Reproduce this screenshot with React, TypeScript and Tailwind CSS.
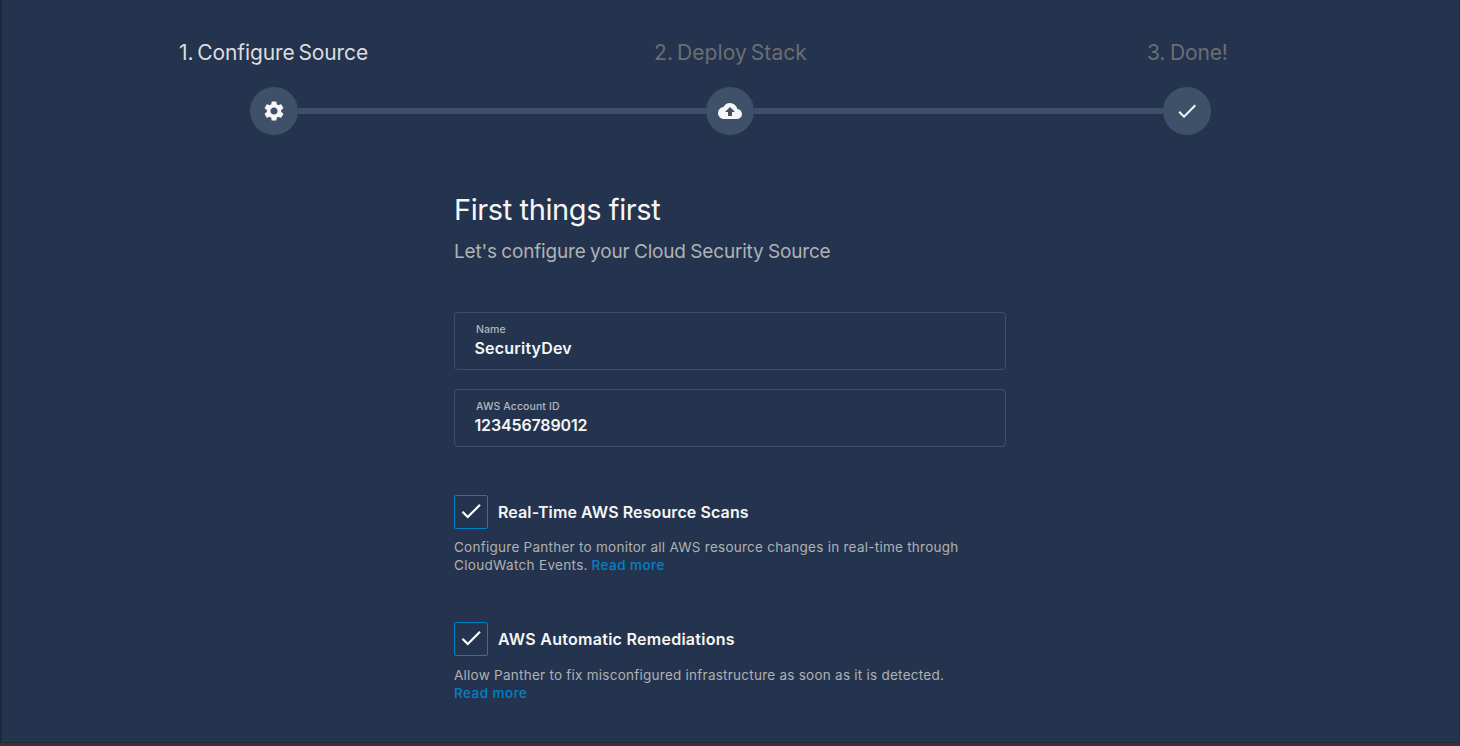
import { MdBackup, MdCheck, MdSettings } from 'react-icons/md';
import type { ReactNode } from 'react';

function StepIcon({ children }: { children: ReactNode }) {
  return (
    <div className="flex size-12 shrink-0 items-center justify-center rounded-full bg-[#3e5169] text-[#f6f6f6]">
      {children}
    </div>
  );
}

function Field({ label, value, valueClass, labelClass }: { label: string; value: string; valueClass: string; labelClass: string }) {
  return (
    <div className="flex h-[58px] flex-col rounded border border-[#3e5069] pt-2.5 pl-5">
      <span className={`pl-px text-[10.5px] leading-[14px] font-medium whitespace-nowrap text-[#b4b7bb] ${labelClass}`}>{label}</span>
      <span className={`-mt-px -ml-[0.5px] text-base leading-6 font-semibold whitespace-nowrap text-[#f6f6f6] ${valueClass}`}>{value}</span>
    </div>
  );
}

function Option({ title, titleClass, children }: { title: string; titleClass: string; children: ReactNode }) {
  return (
    <section>
      <div className="flex items-center gap-2.5">
        <div className="flex size-[34px] items-center justify-center rounded-[2px] border border-[#0081c9] pb-0.5 text-white">
          <MdCheck size={26} />
        </div>
        <h2 className={`text-base leading-6 font-semibold whitespace-nowrap text-[#f6f6f6] ${titleClass}`}>{title}</h2>
      </div>
      <div className="text-[13.5px] leading-[18px] whitespace-nowrap text-[#afb1b3]">{children}</div>
    </section>
  );
}

export default function App() {
  return (
    <div className="flex h-[746px] w-[1460px] flex-col overflow-hidden bg-[#333333] font-['Inter','Liberation_Sans',sans-serif]">
      <main className="h-[743px] border-r border-b border-l-2 border-r-[#1c2739] border-b-[#262a32] border-l-[#1c2739] bg-[#24344e]">
        <header className="pt-[38px]">
          <div className="flex h-[30px] text-[21px] leading-[30px] whitespace-nowrap">
            <div className="w-[475px] pl-[177px] text-[#dcdddf]"><span className="tracking-[-0.1px] [word-spacing:-2px]">1. Configure Source</span></div>
            <div className="w-[493px] pl-[177px] text-[#6c6d71]"><span className="tracking-[0.08px] [word-spacing:-2px]">2. Deploy Stack</span></div>
            <div className="pl-[177px] text-[#6c6d71]"><span className="tracking-[-0.15px] [word-spacing:-1px]">3. Done!</span></div>
          </div>
          <div className="mt-[19px] ml-[248px] flex w-[961px] items-center">
            <StepIcon><MdSettings size={24} /></StepIcon>
            <div className="h-1.5 w-[408px] bg-[#3e5069]" />
            <StepIcon><MdBackup size={24} /></StepIcon>
            <div className="h-1.5 flex-1 bg-[#3e5069]" />
            <StepIcon><MdCheck size={24} /></StepIcon>
          </div>
        </header>
        <div className="ml-[452px] w-[552px] pt-[55px]">
          <h1 className="h-10 text-[29px] leading-10 tracking-[-0.4px] whitespace-nowrap text-[#f6f6f6]">First things first</h1>
          <p className="mt-[7px] h-[30px] text-[19px] leading-[30px] tracking-[-0.19px] whitespace-nowrap text-[#afb1b3] [word-spacing:-0.6px]">Let's configure your Cloud Security Source</p>
          <div className="mt-[45px] flex flex-col gap-[19px]">
            <Field label="Name" value="SecurityDev" valueClass="tracking-[0.2px]" labelClass="tracking-[0.1px]" />
            <Field label="AWS Account ID" value="123456789012" valueClass="tracking-[-0.15px]" labelClass="tracking-[0.1px]" />
          </div>
          <div className="mt-12 flex flex-col gap-12">
            <Option title="Real-Time AWS Resource Scans" titleClass="tracking-[0.1px]">
              <p className="mt-[9px]"><span className="tracking-[0.26px]">Configure Panther to monitor all AWS resource changes in real-time through</span></p>
              <p><span className="tracking-[0.32px]">CloudWatch Events.</span> <a className="font-medium tracking-[0.45px] text-[#0081c9]">Read more</a></p>
            </Option>
            <Option title="AWS Automatic Remediations" titleClass="tracking-[0.27px]">
              <p className="mt-2.5"><span className="tracking-[0.25px]">Allow Panther to fix misconfigured infrastructure as soon as it is detected.</span></p>
              <p><a className="font-medium tracking-[0.47px] text-[#0081c9]">Read more</a></p>
            </Option>
          </div>
        </div>
      </main>
    </div>
  );
}
